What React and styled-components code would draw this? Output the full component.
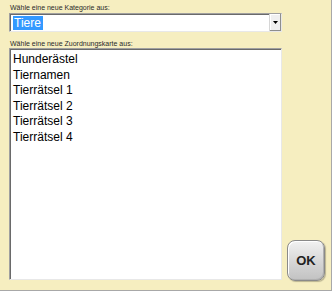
import styled, { createGlobalStyle } from "styled-components";

const GlobalStyle = createGlobalStyle`
  html, body {
    margin: 0;
    padding: 0;
    background: #ffffff;
  }
`;

const Panel = styled.div`
  box-sizing: border-box;
  width: 332px;
  height: 291px;
  display: flex;
  flex-direction: column;
  padding: 4px 0 0 9px;
  background: #f6eec0;
  border-right: 1px solid #a8a8a8;
  border-bottom: 1px solid #a8a8a8;
  font-family: "Liberation Sans", Arial, sans-serif;
`;

const Label = styled.div`
  font-size: 7px;
  line-height: 8px;
  height: 8px;
  color: #2a2a2a;
  padding-left: 1px;
  margin-top: ${(p) => p.$top || 0}px;
  white-space: nowrap;
`;

const Combo = styled.div`
  box-sizing: border-box;
  width: 273px;
  height: 19px;
  margin-top: 1px;
  display: flex;
  background: #ffffff;
  border-top: 1px solid #a0a0a0;
  border-left: 1px solid #a0a0a0;
  border-right: 1px solid #e8e8e8;
  border-bottom: 1px solid #e8e8e8;
  box-shadow: inset 1px 1px 0 #6a6a6a;
`;

const ComboText = styled.div`
  flex: 1;
  display: flex;
  align-items: center;
  padding-left: 3px;
  font-size: 12px;
`;

const Selected = styled.span`
  background: #3399ff;
  color: #ffffff;
  padding: 0 2px 0 1px;
  line-height: 14px;
`;

const DropButton = styled.div`
  width: 11px;
  display: flex;
  align-items: center;
  justify-content: center;
  background: #f0f0f0;
  border-left: 1px solid #d6d6d6;
  box-shadow: inset -1px -1px 0 #8e8e8e, inset 1px 1px 0 #ffffff;
`;

const Row = styled.div`
  display: flex;
  align-items: flex-end;
  gap: 5px;
`;

const ListBox = styled.div`
  box-sizing: border-box;
  width: 273px;
  height: 232px;
  background: #ffffff;
  border-top: 1px solid #a0a0a0;
  border-left: 1px solid #a0a0a0;
  border-right: 1px solid #e8e8e8;
  border-bottom: 1px solid #e8e8e8;
  box-shadow: inset 1px 1px 0 #6a6a6a;
  padding: 3px 0 0 3px;
`;

const Item = styled.div`
  font-size: 12px;
  line-height: 15.6px;
  color: #000000;
  white-space: nowrap;
`;

const OkButton = styled.button`
  box-sizing: border-box;
  width: 38px;
  height: 41px;
  margin-bottom: -1px;
  border: 1px solid #8a8a8a;
  border-radius: 8px;
  background: linear-gradient(#f2f2f2, #d6d6d6 55%, #c2c2c2);
  box-shadow: inset 1px 1px 0 #ffffff, inset -1px -1px 0 #b0b0b0,
    1px 1px 1px rgba(0, 0, 0, 0.25);
  font-family: "Liberation Sans", Arial, sans-serif;
  font-weight: bold;
  font-size: 13px;
  color: #222222;
  padding: 0;
`;

const items = [
  "Hunderästel",
  "Tiernamen",
  "Tierrätsel 1",
  "Tierrätsel 2",
  "Tierrätsel 3",
  "Tierrätsel 4",
];

export default function App() {
  return (
    <>
      <GlobalStyle />
      <Panel>
        <Label>Wähle eine neue Kategorie aus:</Label>
        <Combo>
          <ComboText>
            <Selected>Tiere</Selected>
          </ComboText>
          <DropButton>
            <svg width="5" height="3" viewBox="0 0 5 3">
              <path d="M0 0h5L2.5 3z" fill="#000" />
            </svg>
          </DropButton>
        </Combo>
        <Label $top={8}>Wähle eine neue Zuordnungskarte aus:</Label>
        <Row>
          <ListBox>
            {items.map((it) => (
              <Item key={it}>{it}</Item>
            ))}
          </ListBox>
          <OkButton>OK</OkButton>
        </Row>
      </Panel>
    </>
  );
}
